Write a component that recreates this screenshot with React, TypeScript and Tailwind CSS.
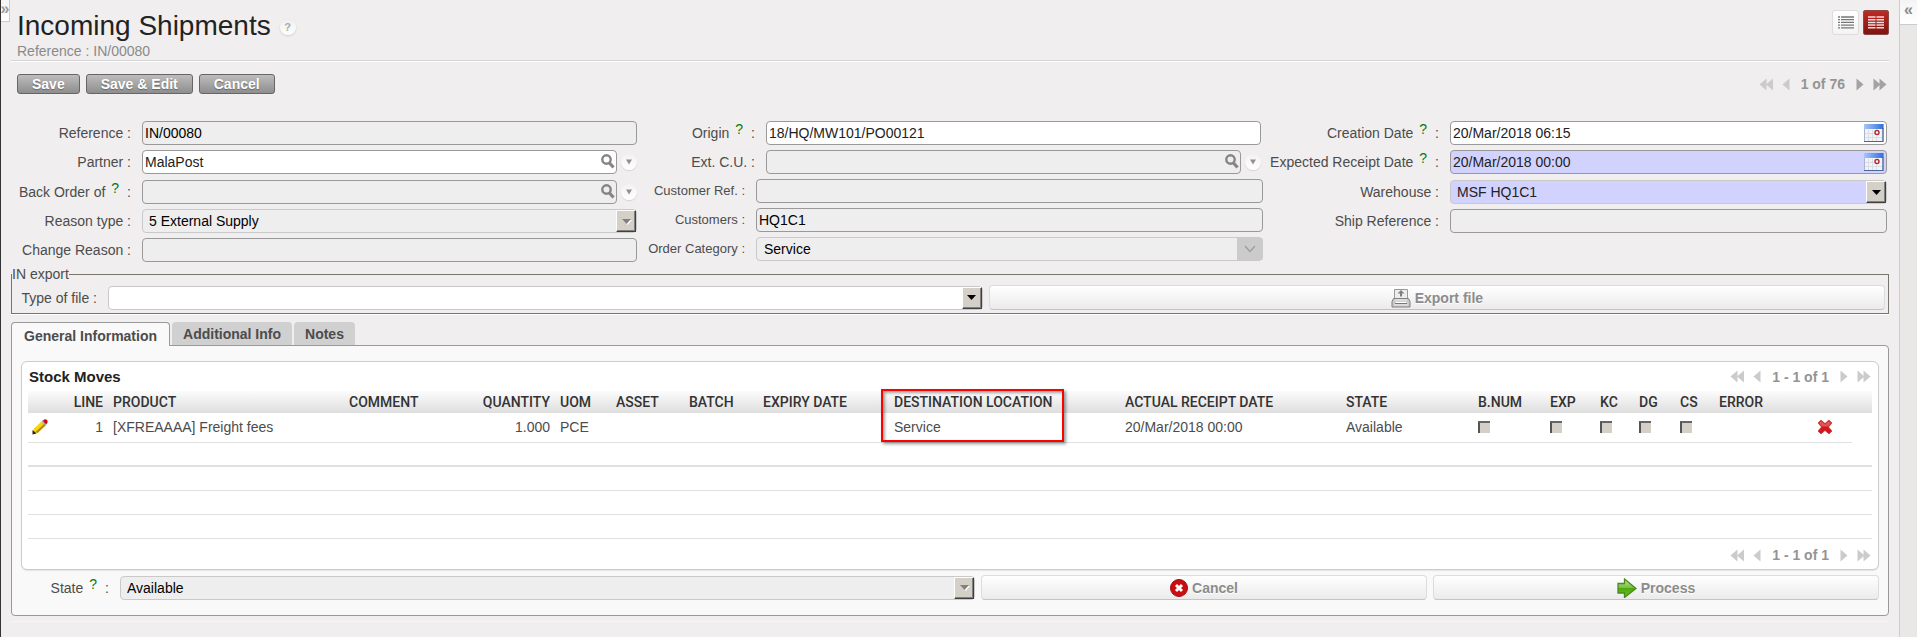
import type { ReactNode } from "react";
import clsx from "clsx";

const inputBase =
  "h-6 w-full min-w-0 rounded-[4px] border border-[#999] pl-0.5 text-sm text-[#222] outline-none";

const tones = {
  plain: "bg-white",
  readonly: "bg-[#eee] text-black",
  required: "bg-[#d2d2ff]",
};

type Tone = keyof typeof tones;

function Label({ id, text, help, width, small }: { id: string; text: string; help?: boolean; width: string; small?: boolean }) {
  return (
    <label
      htmlFor={id}
      className={clsx("h-6 shrink-0 overflow-hidden whitespace-nowrap pr-[11px] text-right leading-6 text-[#4c4c4c]", small ? "text-[13px]" : "text-sm", width)}
    >
      {text}
      {help ? <span className="mr-2 ml-1.5 align-[4px] leading-none text-[#0a7a0a]">?</span> : " "}:
    </label>
  );
}

function TextField({ id, value = "", tone = "readonly" }: { id: string; value?: string; tone?: Tone }) {
  return <input id={id} type="text" defaultValue={value} readOnly={tone === "readonly"} className={clsx(inputBase, tones[tone])} />;
}

function SearchField({ id, value = "", tone = "readonly" }: { id: string; value?: string; tone?: Tone }) {
  return (
    <div className="flex min-w-0 flex-1 items-center gap-1">
      <div className="relative min-w-0 flex-1">
        <input id={id} type="text" defaultValue={value} readOnly={tone === "readonly"} className={clsx(inputBase, "block", tones[tone])} />
        <svg viewBox="0 0 14 15" className="absolute top-1 right-0.5 h-[15px] w-[14px]" fill="none" stroke="#858585">
          <circle cx="5.500" cy="5.500" r="4.200" strokeWidth="2.400" />
          <path d="M8.500 9l4 4.500" strokeWidth="3.200" />
        </svg>
      </div>
      <button type="button" aria-label="Open related" className="size-4 shrink-0 rounded-full bg-linear-to-b from-[#f2f2f2] to-white shadow-[0_1px_1px_#d2d2d2]">
        <svg viewBox="0 0 16 16" className="size-4">
          <path d="M5 5.500h6l-3 5z" fill="#909090" />
        </svg>
      </button>
    </div>
  );
}

function DateField({ id, value }: { id: string; value: string }) {
  const required = id === "expected";
  return (
    <div className="relative min-w-0 flex-1">
      <input id={id} type="text" defaultValue={value} className={clsx(inputBase, "block", required ? tones.required : tones.plain)} />
      <svg viewBox="0 0 20 18" className="absolute top-[3px] right-[3px] h-[18px] w-5">
        <defs>
          <linearGradient id={`cal-${id}`} x1="0" x2="1">
            <stop offset="0" stopColor="#a9c6f5" />
            <stop offset="1" stopColor="#2f6fe0" />
          </linearGradient>
        </defs>
        <rect x="0.500" y="0.500" width="18.500" height="17" fill="#f1f3f8" stroke="#a9b5cc" />
        <rect x="0" y="0" width="19.500" height="5" fill={`url(#cal-${id})`} />
        <path d="M19 4v13.500M0 17.500h19.500" stroke="#49669a" strokeWidth="1.200" />
        <path d="M1 9.500h10M1 13.500h17M4.500 6v11M8.500 6v11M12.500 12v5" stroke="#dadde4" />
        <circle cx="13" cy="8.500" r="2" fill="#fff" stroke="#b02a30" strokeWidth="1.400" />
      </svg>
    </div>
  );
}

function SelectField({ id, value = "", tone = "readonly", flat }: { id: string; value?: string; tone?: Tone; flat?: boolean }) {
  const disabled = tone === "readonly";
  return (
    <div className="relative min-w-0 flex-1">
      <select
        id={id}
        disabled={disabled}
        className={clsx("block h-6 w-full appearance-none rounded-[4px] border border-[#c9c9c9] text-sm text-[#222] opacity-100 outline-none", flat ? "pl-[7px]" : "pl-1.5", tones[tone])}
      >
        <option>{value}</option>
      </select>
      {flat ? (
        <span className="pointer-events-none absolute top-px right-0 flex h-[22px] w-[26px] items-center justify-center rounded-r-[3px] bg-[#cbcbcb]">
          <svg viewBox="0 0 12 8" className="h-2 w-3" fill="none" stroke="#9c9c9c" strokeWidth="1.200">
            <path d="M1 1l5 5.500l5-5.500" />
          </svg>
        </span>
      ) : (
        <span className="pointer-events-none absolute top-px right-px flex h-[22px] w-5 items-center justify-center border border-t-white border-r-[#404040] border-b-[#404040] border-l-white bg-[#d4d0c8] shadow-[inset_-1px_-1px_0_#808080]">
          <svg viewBox="0 0 11 7" className="h-[7px] w-[11px]">
            {disabled && <path d="M2 2h9l-4.500 5z" fill="#fff" />}
            <path d="M1 1h9l-4.500 5z" fill={disabled ? "#808080" : "#000"} />
          </svg>
        </span>
      )}
    </div>
  );
}

function Row({ children, tall, inset }: { children: ReactNode; tall?: boolean; inset?: boolean }) {
  return <div className={clsx("flex items-start last:h-7", tall ? "h-[30px]" : "h-[29px]", inset && "pr-0.5")}>{children}</div>;
}

function Arrows({ dir, double, color }: { dir: "left" | "right"; double?: boolean; color: string }) {
  const left = dir === "left";
  return (
    <svg viewBox={double ? "0 0 14 13" : "0 0 8 13"} className={clsx("h-[13px]", double ? "w-[14px]" : "w-2")} fill={color}>
      {left ? <path d="M7.500 0.500v12L0.500 6.500z" /> : <path d="M0.500 0.500v12l7-6z" />}
      {double && (left ? <path d="M14 0.500v12L7 6.500z" /> : <path d="M6.500 0.500v12l7-6z" />)}
    </svg>
  );
}

function Pager({ text, next }: { text: string; next: string }) {
  return (
    <div className="flex items-center text-sm leading-4 font-bold text-[#949494]">
      <button type="button" aria-label="First" className="mr-[9px]"><Arrows dir="left" double color="#cbcbcb" /></button>
      <button type="button" aria-label="Previous" className="mr-[11px]"><Arrows dir="left" color="#cbcbcb" /></button>
      <span>{text}</span>
      <button type="button" aria-label="Next" className="ml-[11px]"><Arrows dir="right" color={next} /></button>
      <button type="button" aria-label="Last" className="ml-[9px]"><Arrows dir="right" double color={next} /></button>
    </div>
  );
}

function ToolButton({ children }: { children: ReactNode }) {
  return (
    <button
      type="button"
      className="h-5 rounded-[3px] border border-[#666] bg-linear-to-b from-[#bdbdbd] to-[#8e8e8e] px-3.5 text-sm leading-4 font-bold text-white [text-shadow:0_1px_1px_#666]"
    >
      {children}
    </button>
  );
}

function WideButton({ icon, children }: { icon: ReactNode; children: ReactNode }) {
  return (
    <button
      type="button"
      className="flex h-[25px] items-center justify-center gap-1 rounded-[4px] border border-[#dcdcdc] border-b-[#c4c4c4] bg-linear-to-b from-white to-[#ebebeb] text-sm leading-4 font-bold text-[#8c8c8c] [text-shadow:0_1px_0_#fff]"
    >
      {icon}
      {children}
    </button>
  );
}

function ExportIcon() {
  return (
    <svg viewBox="0 0 20 20" className="size-5">
      <path d="M3.500 12V1.500h13V12" fill="#ededed" stroke="#9a9a9a" />
      <path d="M10 2l3.500 3.500h-2.500v3h-2v-3H6.500z" fill="#808080" />
      <path d="M2.500 10.500h15l1.500 3v5.500H1v-5.500z" fill="#c9c9c9" stroke="#808080" />
      <path d="M4 12h12M3 17h14" stroke="#ececec" />
      <path d="M4.500 14.500h11" stroke="#fff" strokeWidth="1.500" />
      <path d="M4 15.500h12" stroke="#777" />
    </svg>
  );
}

function CancelIcon() {
  return (
    <svg viewBox="0 0 18 18" className="size-[18px]">
      <circle cx="9" cy="9" r="8.500" fill="#c80f12" stroke="#a80c0e" />
      <path d="M6 6l6 6M12 6l-6 6" stroke="#fff" strokeWidth="3" />
    </svg>
  );
}

function ProcessIcon() {
  return (
    <svg viewBox="0 0 20 20" className="size-5">
      <defs>
        <linearGradient id="process" x1="0" x2="0" y1="0" y2="1">
          <stop offset="0" stopColor="#c4e6a6" />
          <stop offset="0.500" stopColor="#73bd3a" />
          <stop offset="0.510" stopColor="#4cab0c" />
          <stop offset="1" stopColor="#6cc02c" />
        </linearGradient>
      </defs>
      <path d="M1 5.500h6.500V1L19 10.500 7.500 19.500V15H1z" fill="url(#process)" stroke="#4a8a1c" strokeWidth="1.300" />
    </svg>
  );
}

function PencilIcon() {
  return (
    <svg viewBox="0 0 16 16" className="size-4">
      <path d="M1 15l0.500-5L10 2l4 4-8.500 8z" fill="#f7d50a" />
      <path d="M5.500 14L14 6l-1.500-1.500L3.500 13z" fill="#b8860b" />
      <path d="M0.500 15.500v-4.500l4 3.500z" fill="#2b2613" />
      <path d="M9.500 2.500L11 1l4 4-1.500 1.500z" fill="#7fb4e0" />
      <path d="M11 1.500Q13-0.500 15 1q1.500 2-0.500 4L13 4.500z" fill="#d6050f" />
    </svg>
  );
}

function DeleteIcon() {
  return (
    <svg viewBox="0 0 16 16" className="size-4">
      <path d="M4 1l4 3.500L12 1l3 3-3.500 4L15 12l-3 3-4-3.500L4 15l-3-3 3.500-4L1 4z" fill="#d3171a" stroke="#b03033" strokeWidth="0.600" />
      <path d="M4 2l4 3.500L12 2l2 2-3 3.500h-6L2 4z" fill="#dc5656" />
    </svg>
  );
}

const flags = ["B.NUM", "EXP", "KC", "DG", "CS"];
const cell = "px-[5px] pb-0.5 border-b border-[#e0e0e0] whitespace-nowrap";

function StockMoves() {
  return (
    <table className="w-full table-fixed border-separate border-spacing-0 text-left text-sm text-[#4c4c4c]">
      <colgroup>
        <col className="w-[30px]" />
        <col className="w-[50px]" />
        <col className="w-[236px]" />
        <col className="w-[131px]" />
        <col className="w-[80px]" />
        <col className="w-[56px]" />
        <col className="w-[73px]" />
        <col className="w-[74px]" />
        <col className="w-[131px]" />
        <col className="w-[231px]" />
        <col className="w-[221px]" />
        <col className="w-[132px]" />
        <col className="w-[72px]" />
        <col className="w-[50px]" />
        <col className="w-[39px]" />
        <col className="w-[41px]" />
        <col className="w-[39px]" />
        <col className="w-[84px]" />
        <col className="w-[54px]" />
        <col className="w-[20px]" />
      </colgroup>
      <thead>
        <tr className="h-[22px] bg-linear-to-b from-[#fcfcfc] to-[#dedede] font-[Roboto,sans-serif] whitespace-nowrap text-[#333] [&>th]:px-[5px] [&>th]:font-medium">
          <th />
          <th className="text-right">LINE</th>
          <th>PRODUCT</th>
          <th>COMMENT</th>
          <th className="text-right">QUANTITY</th>
          <th>UOM</th>
          <th>ASSET</th>
          <th>BATCH</th>
          <th>EXPIRY DATE</th>
          <th className="relative">
            DESTINATION LOCATION
            <span className="pointer-events-none absolute -top-0.5 -left-2 h-[53px] w-[183px] border-2 border-[#f00] shadow-[2px_2px_3px_rgba(0,0,0,0.4),inset_2px_2px_3px_rgba(0,0,0,0.35)]" />
          </th>
          <th>ACTUAL RECEIPT DATE</th>
          <th>STATE</th>
          {flags.map(f => <th key={f}>{f}</th>)}
          <th>ERROR</th>
          <th />
          <th />
        </tr>
      </thead>
      <tbody>
        <tr className="h-[30px]">
          <td className={clsx(cell, "pl-1")}>
            <button type="button" aria-label="Edit line" className="block"><PencilIcon /></button>
          </td>
          <td className={clsx(cell, "text-right")}>1</td>
          <td className={cell}>[XFREAAAA] Freight fees</td>
          <td className={cell} />
          <td className={clsx(cell, "text-right")}>1.000</td>
          <td className={cell}>PCE</td>
          <td className={cell} />
          <td className={cell} />
          <td className={cell} />
          <td className={cell}>Service</td>
          <td className={cell}>20/Mar/2018 00:00</td>
          <td className={cell}>Available</td>
          {flags.map(f => (
            <td key={f} className={cell}>
              <input type="checkbox" disabled aria-label={f} className="block size-3 appearance-none border-t-2 border-l-2 border-t-[#666] border-l-[#555] bg-[#d4d0c8]" />
            </td>
          ))}
          <td className={cell} />
          <td className={cell}>
            <button type="button" aria-label="Delete line" className="mx-auto block"><DeleteIcon /></button>
          </td>
          <td />
        </tr>
        <tr className="h-6"><td colSpan={20} className="border-b-2 border-[#e0e0e0]" /></tr>
        <tr className="h-6"><td colSpan={20} className="border-b border-[#e0e0e0]" /></tr>
        <tr className="h-6"><td colSpan={20} className="border-b border-[#e0e0e0]" /></tr>
        <tr className="h-6"><td colSpan={20} className="border-b border-[#e0e0e0]" /></tr>
      </tbody>
    </table>
  );
}

export default function App() {
  return (
    <div className="relative flex min-h-screen border-l border-[#333] bg-[#f0eeee] font-['Liberation_Sans',Arial,sans-serif]">
      <button
        type="button"
        aria-label="Show menu"
        className="absolute top-0 left-0 flex h-[22px] w-[9px] items-center justify-center border-r border-b border-[#ccc] bg-linear-to-b from-[#f4f4f4] to-white pb-1 text-base leading-none font-bold text-[#999]"
      >
        »
      </button>

      <main className="min-w-0 flex-1 px-[10px] pt-[10px]">
        <header className="flex items-start justify-between border-b border-[#d4d4d4] pb-px shadow-[0_1px_0_#fff]">
          <div className="pl-1.5">
            <div className="flex items-center gap-[9px]">
              <h1 className="text-[28px] leading-8 text-[#222]">Incoming Shipments</h1>
              <a href="#help" aria-label="Help" className="mt-0.5 flex size-4 items-center justify-center rounded-full bg-linear-to-b from-[#eee] to-white text-[11px] leading-none font-bold text-[#aaa] shadow-[0_1px_2px_#ccc]">?</a>
            </div>
            <p className="pt-px text-sm leading-4 text-[#8a8a8a]">Reference : IN/00080</p>
          </div>
          <div className="flex gap-1">
            <button type="button" aria-label="List view" className="flex h-[25px] w-[27px] items-center justify-center rounded-[3px] border border-[#ddd] bg-linear-to-b from-white to-[#f4f4f4]">
              <svg viewBox="0 0 16 13" className="h-[13px] w-4" stroke="#777" strokeWidth="1.300">
                <path d="M0 1h2M3 1h13M0 3.700h2M3 3.700h13M0 6.400h2M3 6.400h13M0 9.100h2M3 9.100h13M0 11.800h2M3 11.800h13" />
              </svg>
            </button>
            <button type="button" aria-label="Form view" className="flex h-[25px] w-[26px] items-center justify-center rounded-[2px] border border-[#8a4a48] bg-linear-to-b from-[#c12a22] to-[#7d1512]">
              <svg viewBox="0 0 16 13" className="h-[13px] w-4" stroke="#f3dcdb" strokeWidth="1.500">
                <path d="M0 1h7.500M8.500 1h7.500M0 3.700h7.500M8.500 3.700h7.500M0 6.400h7.500M8.500 6.400h7.500M0 9.100h7.500M8.500 9.100h7.500M0 11.800h7.500M8.500 11.800h7.500" />
              </svg>
            </button>
          </div>
        </header>

        <div className="mt-[13px] flex items-center justify-between pr-0.5 pl-1.5">
          <div className="flex gap-1.5">
            <ToolButton>Save</ToolButton>
            <ToolButton>Save &amp; Edit</ToolButton>
            <ToolButton>Cancel</ToolButton>
          </div>
          <Pager text="1 of 76" next="#a3a3a3" />
        </div>

        <form className="mt-[27px] grid grid-cols-3">
          <div>
            <Row><Label id="reference" text="Reference" width="w-[131px]" /><TextField id="reference" value="IN/00080" /></Row>
            <Row tall><Label id="partner" text="Partner" width="w-[131px]" /><SearchField id="partner" value="MalaPost" tone="plain" /></Row>
            <Row><Label id="backorder" text="Back Order of" help width="w-[131px]" /><SearchField id="backorder" /></Row>
            <Row><Label id="reason" text="Reason type" width="w-[131px]" /><SelectField id="reason" value="5 External Supply" /></Row>
            <Row><Label id="change" text="Change Reason" width="w-[131px]" /><TextField id="change" /></Row>
          </div>
          <div>
            <Row inset><Label id="origin" text="Origin" help width="w-[129px]" /><TextField id="origin" value="18/HQ/MW101/PO00121" tone="plain" /></Row>
            <Row inset><Label id="extcu" text="Ext. C.U." width="w-[129px]" /><SearchField id="extcu" /></Row>
            <Row><Label id="custref" text="Customer Ref." small width="w-[119px]" /><TextField id="custref" /></Row>
            <Row><Label id="customers" text="Customers" small width="w-[119px]" /><TextField id="customers" value="HQ1C1" /></Row>
            <Row><Label id="category" text="Order Category" small width="w-[119px]" /><SelectField id="category" value="Service" flat /></Row>
          </div>
          <div className="pr-0.5">
            <Row><Label id="creation" text="Creation Date" help width="w-[187px]" /><DateField id="creation" value="20/Mar/2018 06:15" /></Row>
            <Row tall><Label id="expected" text="Expected Receipt Date" help width="w-[187px]" /><DateField id="expected" value="20/Mar/2018 00:00" /></Row>
            <Row><Label id="warehouse" text="Warehouse" width="w-[187px]" /><SelectField id="warehouse" value="MSF HQ1C1" tone="required" /></Row>
            <Row><Label id="shipref" text="Ship Reference" width="w-[187px]" /><TextField id="shipref" /></Row>
          </div>
        </form>

        <fieldset className="border border-[#77756d] pr-[3px] pb-[3px] shadow-[0_1px_0_#fff]">
          <legend className="text-sm leading-4 text-[#4c4c4c]">IN export</legend>
          <div className="grid grid-cols-[13fr_12fr] items-center gap-1.5 pt-[3px]">
            <div className="flex">
              <Label id="filetype" text="Type of file" width="w-[96px]" />
              <SelectField id="filetype" tone="plain" />
            </div>
            <WideButton icon={<ExportIcon />}>Export file</WideButton>
          </div>
        </fieldset>

        <nav className="mt-2 flex items-start gap-0.5 text-sm leading-4 font-bold text-[#4c4c4c]">
          <button type="button" className="relative z-10 -mb-px h-6 rounded-t-[4px] border border-b-0 border-[#999] bg-[#f9f9f9] px-3 pt-0.5">General Information</button>
          <button type="button" className="h-[23px] rounded-t-[4px] bg-[#d0d0d0] px-[11px]">Additional Info</button>
          <button type="button" className="h-[23px] rounded-t-[4px] bg-[#d0d0d0] px-[11px]">Notes</button>
        </nav>

        <section className="rounded-[4px] rounded-tl-none border border-[#999] bg-[#f9f9f9] px-[9px] pt-[15px] pb-[15px]">
          <div className="rounded-[6px] border border-[#ccc] bg-white px-1.5 shadow-[0_1px_1px_#e4e4e4]">
            <div className="flex h-[29px] items-center justify-between px-px">
              <h2 className="text-[15px] leading-4 font-bold text-[#222]">Stock Moves</h2>
              <Pager text="1 - 1 of 1" next="#cbcbcb" />
            </div>
            <StockMoves />
            <div className="flex h-[30px] items-center justify-end px-px pt-0.5">
              <Pager text="1 - 1 of 1" next="#cbcbcb" />
            </div>
          </div>

          <div className="mt-[5px] grid grid-cols-[954fr_446fr_446fr] items-center gap-1.5">
            <div className="flex">
              <Label id="state" text="State" help width="w-[99px]" />
              <SelectField id="state" value="Available" />
            </div>
            <WideButton icon={<CancelIcon />}>Cancel</WideButton>
            <WideButton icon={<ProcessIcon />}>Process</WideButton>
          </div>
        </section>
        <div className="mt-[5px] border-t border-[#f6f5f5]" />
      </main>

      <aside className="w-[18px] shrink-0 border-l border-[#ccc] bg-[#e9e8e6]">
        <button type="button" aria-label="Show side bar" className="flex h-[25px] w-full items-center justify-center border-b border-[#ccc] bg-linear-to-b from-[#f4f4f4] to-white pb-1 text-base leading-none font-bold text-[#888]">
          «
        </button>
      </aside>
    </div>
  );
}
